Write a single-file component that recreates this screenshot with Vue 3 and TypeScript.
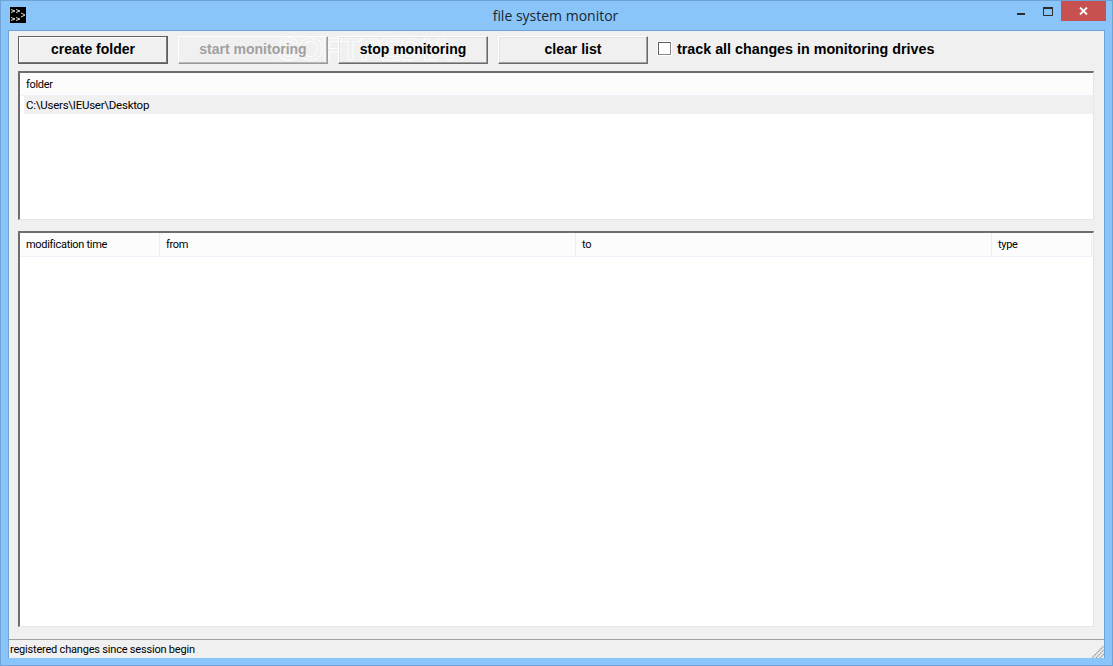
<template>
  <div class="window">
    <header class="titlebar">
      <svg class="app-icon" width="16" height="16" viewBox="0 0 16 16">
        <rect width="16" height="16" fill="#000" />
        <path d="M1 2.5l4 1.5-4 1.5M6 2.5l4 1.5-4 1.5M11 6l4 2-4 2M1 10.5l4 1.5-4 1.5M6 10.5l4 1.5-4 1.5" fill="none" stroke="#d8d8d8" stroke-width="1" />
      </svg>
      <span class="title">file system monitor</span>
      <div class="controls">
        <svg class="min" width="8" height="2" viewBox="0 0 8 2"><rect width="8" height="2" fill="#2b2b2b" /></svg>
        <svg class="max" width="10" height="9" viewBox="0 0 10 9">
          <path d="M.5.5h9v8h-9z" fill="none" stroke="#2b2b2b" /><rect width="10" height="2" fill="#2b2b2b" />
        </svg>
        <div class="close">
          <svg width="9" height="8" viewBox="0 0 9 8"><path d="M1 .5l7 7M8 .5l-7 7" stroke="#fff" stroke-width="1.8" fill="none" /></svg>
        </div>
      </div>
    </header>

    <main class="client">
      <div class="content">
        <div class="toolbar">
          <span class="watermark">SOFTPEDIA</span>
          <button v-for="b in buttons" :key="b.label" class="btn" :class="{ primary: b.primary }" :disabled="b.disabled">
            {{ b.label }}
          </button>
          <label class="track">
            <span class="box"></span>
            track all changes in monitoring drives
          </label>
        </div>

        <section class="list top-list">
          <div class="head">
            <div class="cell full">folder</div>
          </div>
          <div class="row selected">C:\Users\IEUser\Desktop</div>
        </section>

        <section class="list bottom-list">
          <div class="head tall">
            <div v-for="c in columns" :key="c.label" class="cell" :style="{ width: c.width + 'px' }">{{ c.label }}</div>
          </div>
        </section>
      </div>

      <footer class="status">
        <span>registered changes since session begin</span>
        <svg class="grip" width="12" height="12" viewBox="0 0 12 12">
          <path d="M0 12L12 0M4 12L12 4M8 12L12 8" stroke="#9a9a9a" stroke-width="1.4" stroke-dasharray="1.4 .7" fill="none" />
        </svg>
      </footer>
    </main>
  </div>
</template>

<script setup lang="ts">
const buttons = [
  { label: 'create folder', primary: true },
  { label: 'start monitoring', disabled: true },
  { label: 'stop monitoring' },
  { label: 'clear list' },
]

const columns = [
  { label: 'modification time', width: 140 },
  { label: 'from', width: 416 },
  { label: 'to', width: 416 },
  { label: 'type', width: 100 },
]
</script>

<style>
html,
body {
  margin: 0;
  height: 100%;
  overflow: hidden;
}
</style>

<style scoped>
.window {
  width: 1113px;
  height: 666px;
  box-sizing: border-box;
  background: #8ac5fa;
  border: 1px solid #6fa3d8;
  display: flex;
  flex-direction: column;
  font-family: 'Liberation Sans', Arial, sans-serif;
  color: #000;
}

.titlebar {
  height: 29px;
  flex: none;
  display: flex;
  align-items: flex-start;
  position: relative;
}

.app-icon {
  margin: 6px 0 0 9px;
}

.title {
  position: absolute;
  left: 0;
  right: 2px;
  top: 5px;
  text-align: center;
  font-family: 'Open Sans', 'Noto Sans', sans-serif;
  font-size: 14px;
  line-height: 20px;
  color: #1a2530;
}

.controls {
  margin-left: auto;
  margin-right: 6px;
  display: flex;
  align-items: flex-start;
}

.min {
  margin: 12px 18px 0 0;
}

.max {
  margin: 6px 8px 0 0;
}

.close {
  width: 45px;
  height: 20px;
  background: #c75050;
  display: flex;
  align-items: center;
  justify-content: center;
}

.client {
  flex: 1;
  margin: 0 7px 7px;
  background: #f0f0f0;
  border: 1px solid #6fa3d8;
  border-width: 1px 1px 0 1px;
  display: flex;
  flex-direction: column;
  min-height: 0;
}

.content {
  flex: 1;
  display: flex;
  flex-direction: column;
  padding: 4px 10px 12px 9px;
  min-height: 0;
}

.toolbar {
  display: flex;
  align-items: center;
  gap: 10px;
  height: 29px;
  position: relative;
}

.btn {
  position: relative;
  z-index: 1;
  width: 150px;
  height: 28px;
  box-sizing: border-box;
  padding: 0 0 2px;
  background: transparent;
  border: 1px solid;
  border-color: #fff #6a6a6a #6a6a6a #fff;
  box-shadow: inset -1px -1px 0 #a0a0a0, inset 1px 1px 0 #e3e3e3;
  font-family: 'Liberation Sans', Arial, sans-serif;
  font-size: 14px;
  font-weight: 700;
  color: #000;
}

.btn.primary {
  border-color: #5f5f5f;
  box-shadow: inset -1px -1px 0 #777, inset 1px 1px 0 #fff;
}

.btn:disabled {
  color: #a0a0a0;
  border-color: #fff #9a9a9a #9a9a9a #fff;
  box-shadow: inset -1px -1px 0 #b8b8b8;
}

.track {
  display: flex;
  align-items: center;
  gap: 6px;
  padding-bottom: 2px;
  font-size: 14.3px;
  font-weight: 700;
  white-space: nowrap;
}

.box {
  width: 11px;
  height: 11px;
  background: #fff;
  border: 1px solid;
  border-color: #5c5c5c #8a8a8a #8a8a8a #5c5c5c;
  outline: 1px solid #fff;
  margin-top: -1px;
}

.watermark {
  position: absolute;
  z-index: 0;
  left: 260px;
  top: 0;
  font-size: 32px;
  line-height: 29px;
  font-weight: 700;
  letter-spacing: -1px;
  color: rgba(240, 240, 240, 0.35);
  -webkit-text-stroke: 1px rgba(255, 255, 255, 0.8);
  pointer-events: none;
}

.list {
  background: #fff;
  border: 1px solid;
  border-color: #6d6d6d #e6e6e6 #e6e6e6 #6d6d6d;
  border-top-width: 2px;
  border-left-width: 2px;
  font-family: Roboto, 'Liberation Sans', sans-serif;
  font-size: 11px;
  letter-spacing: -0.3px;
  color: #000;
  box-sizing: border-box;
}

.top-list {
  height: 149px;
  margin-top: 7px;
}

.bottom-list {
  flex: 1;
  margin-top: 11px;
  min-height: 0;
}

.head {
  height: 23px;
  display: flex;
  background: #fcfcfc;
  border-bottom: 1px solid #eef2fb;
  box-sizing: border-box;
}

.head.tall {
  height: 24px;
}

.cell {
  box-sizing: border-box;
  padding-left: 6px;
  line-height: 24px;
  border-right: 1px solid #e9edf6;
  white-space: nowrap;
}

.cell.full {
  flex: 1;
  border-right: 0;
}

.row {
  height: 18px;
  line-height: 18px;
  margin-left: 4px;
  padding-left: 2px;
  font-size: 11.5px;
  letter-spacing: -0.25px;
}

.row.selected {
  background: #f0f0f0;
}

.status {
  height: 18px;
  flex: none;
  border-top: 1px solid #a0a0a0;
  display: flex;
  align-items: center;
  justify-content: space-between;
  padding-left: 1px;
  font-family: Roboto, 'Liberation Sans', sans-serif;
  font-size: 11px;
  letter-spacing: -0.2px;
  position: relative;
}

.grip {
  position: absolute;
  right: 0;
  bottom: 0;
}
</style>
